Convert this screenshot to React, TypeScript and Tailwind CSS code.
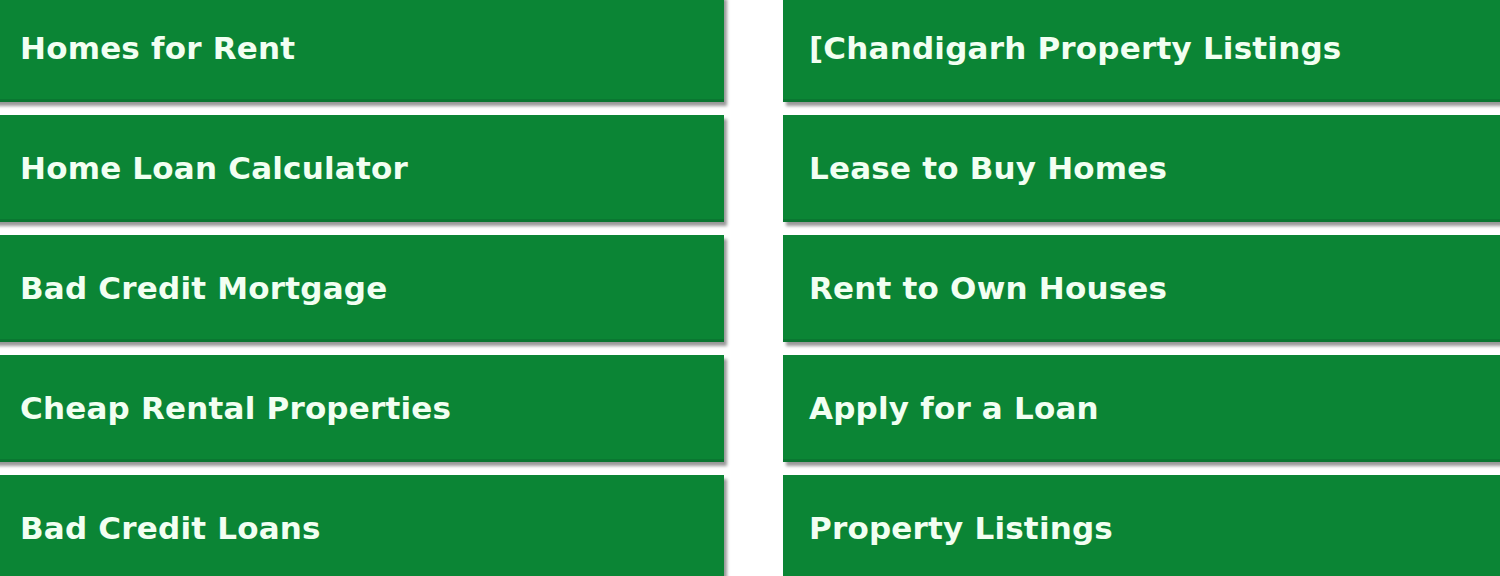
import React from 'react'

const left = [
  'Homes for Rent',
  'Home Loan Calculator',
  'Bad Credit Mortgage',
  'Cheap Rental Properties',
  'Bad Credit Loans',
]

const right = [
  '[Chandigarh Property Listings',
  'Lease to Buy Homes',
  'Rent to Own Houses',
  'Apply for a Loan',
  'Property Listings',
]

const Tile = ({ label }: { label: string }) => (
  <a
    href="#"
    className="flex h-[107px] items-center bg-[#0b8535] border-b-[3px] border-[#0a7731] pl-[26px] pt-[2px] text-[31px] font-bold text-[#f2fff2] shadow-[3px_4px_3px_rgba(0,0,0,0.4)] [font-family:'DejaVu_Sans',Verdana,sans-serif] tracking-[0.2px]"
  >
    {label}
  </a>
)

export default function App() {
  return (
    <div className="h-[576px] w-[1500px] overflow-hidden bg-white">
      <div className="-ml-[6px] -mt-[5px] grid grid-cols-[730px_1fr] gap-x-[59px]">
        <div className="flex flex-col gap-[13px]">
          {left.map((l) => (
            <Tile key={l} label={l} />
          ))}
        </div>
        <div className="flex flex-col gap-[13px]">
          {right.map((l) => (
            <Tile key={l} label={l} />
          ))}
        </div>
      </div>
    </div>
  )
}
